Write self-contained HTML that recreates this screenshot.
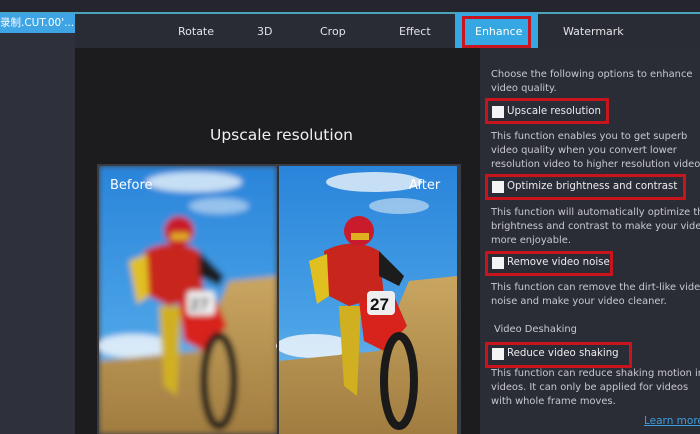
<!DOCTYPE html>
<html><head><meta charset="utf-8"><style>
*{margin:0;padding:0;box-sizing:border-box}
body{width:700px;height:434px;overflow:hidden;background:#2b2d36;font-family:"DejaVu Sans","Liberation Sans","Noto Sans CJK SC",sans-serif;position:relative;color:#d8d8dc}
.a{position:absolute}
.t{position:absolute;font-size:11px;color:#e2e2e6;top:25px}
.r{position:absolute;font-size:9.9px;color:#c8c9cf;left:491px;white-space:nowrap;line-height:14px}
.box{position:absolute;border:3px solid #c8141c}
.cb{position:absolute;width:12px;height:12px;background:#f4f4f4}
.lab{position:absolute;font-size:10.2px;color:#ececf0;white-space:nowrap;line-height:12px}
</style></head><body>
<div class="a" style="left:0;top:0;width:700px;height:12px;background:#25262d"></div>
<div class="a" style="left:0;top:12px;width:700px;height:2px;background:#4aa3b8"></div>
<div class="a" style="left:0;top:14px;width:75px;height:420px;background:#2e303b"></div>
<div class="a" style="left:0;top:13px;width:75px;height:20px;background:#3fa4e4;color:#fff;font-size:10.5px;line-height:20px;white-space:nowrap;overflow:hidden">录制.CUT.00'...</div>
<div class="a" style="left:75px;top:14px;width:625px;height:34px;background:#2a2c35"></div>
<div class="t" style="left:178px">Rotate</div>
<div class="t" style="left:257px">3D</div>
<div class="t" style="left:320px">Crop</div>
<div class="t" style="left:399px">Effect</div>
<div class="a" style="left:455px;top:13px;width:83px;height:35px;background:#35a8e4"></div>
<div class="box" style="left:462px;top:16px;width:69px;height:32px"></div>
<div class="t" style="left:475px;color:#fff">Enhance</div>
<div class="t" style="left:563px">Watermark</div>
<div class="a" style="left:75px;top:48px;width:405px;height:386px;background:#1c1c1e"></div>
<div class="a" style="left:210px;top:126px;font-size:15.5px;color:#f0f0f0">Upscale resolution</div>
<div class="a" style="left:97px;top:164px;width:364px;height:270px;background:#3a3c44"></div>
<svg class="a" style="left:99px;top:166px" width="360" height="268">
<defs>
<linearGradient id="sky" x1="0" y1="0" x2="0" y2="1"><stop offset="0" stop-color="#2a84da"/><stop offset="0.6" stop-color="#4aa2e6"/><stop offset="1" stop-color="#9ccaee"/></linearGradient>
<linearGradient id="sand" x1="0" y1="0" x2="0" y2="1"><stop offset="0" stop-color="#c9a660"/><stop offset="1" stop-color="#a07c40"/></linearGradient>
<g id="scene">
<rect width="178" height="268" fill="url(#sky)"/>
<ellipse cx="95" cy="16" rx="48" ry="10" fill="#e2eef8" opacity=".85"/>
<ellipse cx="120" cy="40" rx="30" ry="8" fill="#d8e8f6" opacity=".6"/>
<ellipse cx="35" cy="180" rx="38" ry="12" fill="#eef4fa" opacity=".85"/>
<path d="M0 195 L100 185 L130 115 L178 110 L178 268 L0 268Z" fill="url(#sand)"/>
<path d="M45 85 Q75 70 100 85 L105 130 L70 140 L50 130Z" fill="#c8261c"/>
<path d="M100 85 L125 110 L120 120 L100 110Z" fill="#1c1c1c"/>
<path d="M30 95 L48 88 L50 130 L38 138Z" fill="#e0c020"/>
<circle cx="80" cy="65" r="15" fill="#c81c2c"/>
<rect x="72" y="67" width="18" height="7" fill="#e0b020"/>
<path d="M60 140 L65 220 L78 230 L82 140Z" fill="#d0b020"/>
<path d="M80 135 L115 130 L128 160 L105 185 L85 175Z" fill="#d8221c"/>
<rect x="88" y="125" width="28" height="24" rx="4" fill="#eee"/>
<text x="91" y="144" font-size="17" font-weight="bold" fill="#111" font-family="Liberation Sans">27</text>
<ellipse cx="120" cy="215" rx="15" ry="45" fill="none" stroke="#1a1a1a" stroke-width="8"/>
</g>
<filter id="bl"><feGaussianBlur stdDeviation="3"/></filter>
</defs>
<g filter="url(#bl)"><use href="#scene"/></g>
<g transform="translate(180,0)"><use href="#scene"/></g>
<rect x="178" y="0" width="2" height="268" fill="#333"/>
<text x="11" y="23" font-size="13" fill="#fff" font-family="DejaVu Sans">Before</text>
<text x="310" y="23" font-size="13" fill="#fff" font-family="DejaVu Sans">After</text>
</svg>
<div class="r" style="top:68px">Choose the following options to enhance<br>video quality.</div>
<div class="box" style="left:485px;top:98px;width:124px;height:26px"></div>
<div class="cb" style="left:492px;top:106px"></div>
<div class="lab" style="left:507px;top:106px">Upscale resolution</div>
<div class="r" style="top:130px">This function enables you to get superb<br>video quality when you convert lower<br>resolution video to higher resolution video</div>
<div class="box" style="left:485px;top:174px;width:201px;height:26px"></div>
<div class="cb" style="left:492px;top:181px"></div>
<div class="lab" style="left:507px;top:181px">Optimize brightness and contrast</div>
<div class="r" style="top:206px">This function will automatically optimize the<br>brightness and contrast to make your video<br>more enjoyable.</div>
<div class="box" style="left:485px;top:251px;width:128px;height:25px"></div>
<div class="cb" style="left:492px;top:257px"></div>
<div class="lab" style="left:507px;top:257px">Remove video noise</div>
<div class="r" style="top:281px">This function can remove the dirt-like video<br>noise and make your video cleaner.</div>
<div class="r" style="top:323px;left:494px">Video Deshaking</div>
<div class="box" style="left:485px;top:342px;width:147px;height:26px"></div>
<div class="cb" style="left:492px;top:348px"></div>
<div class="lab" style="left:507px;top:348px">Reduce video shaking</div>
<div class="r" style="top:367px">This function can reduce shaking motion in<br>videos. It can only be applied for videos<br>with whole frame moves.</div>
<div class="a" style="left:644px;top:415px;font-size:10.5px;color:#3d9ee0;text-decoration:underline;white-space:nowrap">Learn more</div>
</body></html>
